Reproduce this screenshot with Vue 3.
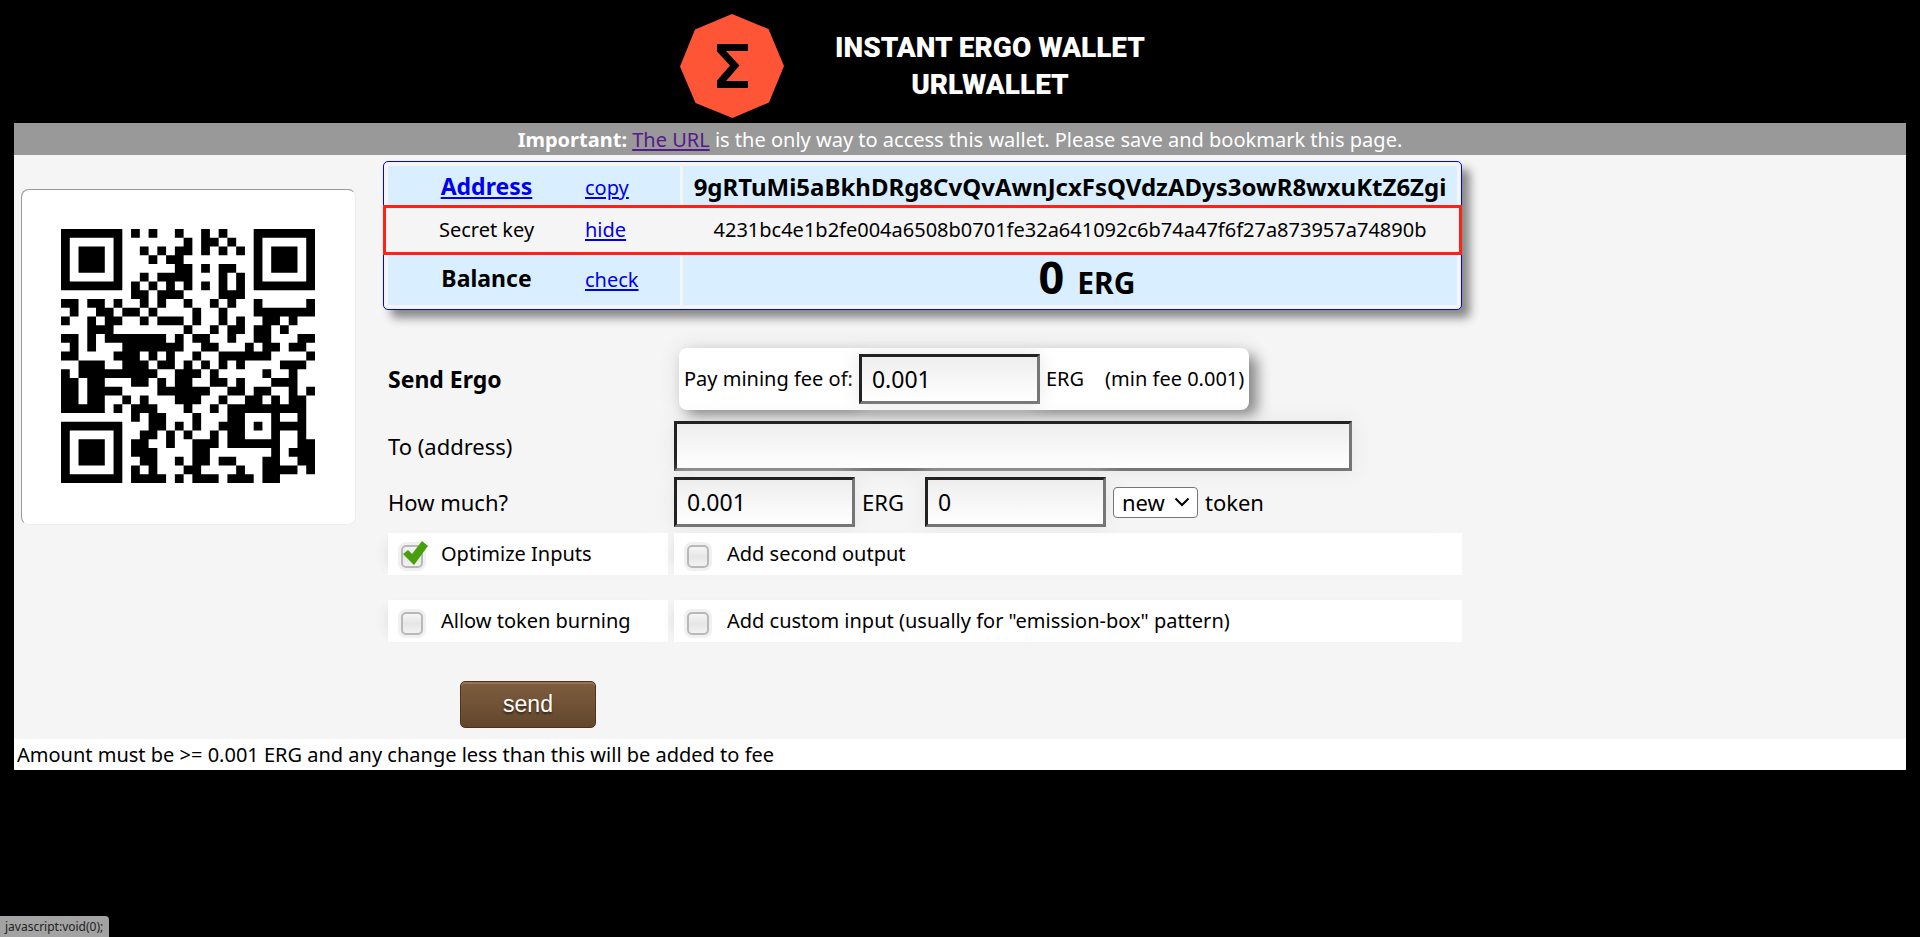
<script setup>
import { ref } from 'vue'

// Dark module runs for each QR row: [first column, last column]
const finder = [[0, 6], [22, 28]]
const ring = [[0, 0], [6, 6], [22, 22], [28, 28]]
const core = [[0, 0], [2, 4], [6, 6], [22, 22], [24, 26], [28, 28]]
const runs = [
  [...finder, [8, 8], [10, 10], [13, 13], [16, 16], [18, 18]],
  [...ring, [14, 14], [16, 17], [19, 19]],
  [...core, [9, 9], [11, 11], [13, 14], [16, 16], [18, 18], [20, 20]],
  [...core, [10, 10], [12, 13]],
  [...core, [13, 14], [16, 16], [18, 19]],
  [...ring, [9, 9], [11, 14], [18, 18], [20, 20]],
  [...finder, [8, 8], [10, 10], [12, 12], [14, 14], [16, 16], [18, 18], [20, 20]],
  [[8, 9], [11, 13], [18, 20]],
  [[0, 1], [3, 4], [6, 6], [9, 9], [11, 11], [14, 14], [17, 17], [19, 19], [22, 22], [28, 28]],
  [[1, 1], [4, 5], [7, 8], [10, 10], [15, 15], [18, 18], [22, 28]],
  [[0, 0], [3, 3], [5, 6], [9, 9], [11, 13], [15, 15], [18, 18], [20, 20], [23, 24], [26, 26]],
  [[3, 5], [14, 14], [17, 17], [19, 20], [22, 23], [25, 25]],
  [[0, 1], [3, 3], [5, 11], [13, 13], [15, 16], [19, 19], [22, 23], [27, 28]],
  [[1, 1], [3, 3], [7, 13], [16, 17], [21, 21], [23, 24], [26, 27]],
  [[0, 1], [6, 8], [10, 10], [12, 12], [15, 15], [18, 23], [28, 28]],
  [[2, 4], [7, 9], [11, 12], [14, 14], [16, 16], [18, 18], [20, 20], [25, 27]],
  [[0, 0], [2, 10], [13, 15], [17, 17], [23, 23], [26, 26]],
  [[0, 1], [3, 4], [8, 9], [11, 11], [13, 14], [17, 18], [20, 20], [24, 26]],
  [[0, 1], [3, 6], [11, 16], [19, 20], [22, 23], [26, 26], [28, 28]],
  [[0, 1], [3, 4], [7, 7], [9, 9], [13, 15], [18, 18], [21, 22], [24, 24], [26, 27]],
  [[0, 4], [6, 6], [8, 10], [14, 14], [17, 17], [19, 27]],
  [[8, 8], [10, 11], [15, 15], [19, 20], [24, 24], [27, 27]],
  [[0, 6], [10, 11], [13, 13], [15, 15], [18, 20], [22, 22], [24, 27]],
  [[0, 0], [6, 6], [9, 10], [12, 12], [14, 14], [17, 17], [19, 20], [24, 24], [27, 27]],
  [[0, 0], [2, 4], [6, 6], [8, 9], [12, 12], [15, 17], [19, 24], [27, 28]],
  [[0, 0], [2, 4], [6, 6], [8, 10], [15, 16], [24, 24], [26, 28]],
  [[0, 0], [2, 4], [6, 6], [9, 10], [13, 13], [15, 16], [18, 19], [23, 24], [27, 28]],
  [[0, 0], [6, 6], [8, 8], [10, 10], [14, 15], [20, 20], [23, 26], [28, 28]],
  [[0, 6], [8, 11], [13, 13], [15, 17], [19, 21], [23, 24]],
]
const qrPath = runs
  .map((row, y) => row.map(([a, b]) => `M${a} ${y}h${b - a + 1}v1h-${b - a + 1}z`).join(''))
  .join('')

const fee = ref('0.001')
const recipient = ref('')
const amount = ref('0.001')
const tokenAmount = ref('0')
const token = ref('new')
const optimize = ref(true)
const secondOutput = ref(false)
const burning = ref(false)
const customInput = ref(false)
</script>

<template>
  <div class="page">
    <header class="top">
      <svg class="logo" viewBox="0 0 104 104" role="img" aria-label="Ergo">
        <path fill="#ff5537" d="M52 0 88.500 15 104 52 89 88.500 52.500 104 15.500 89 0 52.500 15 15.500z" />
        <path fill="#000" d="M37 30H68V37H46L59.500 51.500 46 67H68V74H37V66.500L50 51.500 37 37.500z" />
      </svg>
      <h1>INSTANT ERGO WALLET<br />URLWALLET</h1>
    </header>

    <main>
      <p class="notice">
        <b>Important:</b> <a href="#wallet">The URL</a> is the only way to access this wallet. Please save and bookmark this page.
      </p>

      <div class="body">
        <div class="qr">
          <svg viewBox="0 0 29 29" role="img" aria-label="Wallet address QR code">
            <path :d="qrPath" />
          </svg>
        </div>

        <div class="content">
          <table id="wallet" class="wallet">
            <tbody>
              <tr class="address">
                <th scope="row"><span class="pair"><a href="#wallet">Address</a><a class="action" href="#copy">copy</a></span></th>
                <td>9gRTuMi5aBkhDRg8CvQvAwnJcxFsQVdzADys3owR8wxuKtZ6Zgi</td>
              </tr>
              <tr class="secret">
                <th scope="row"><span class="pair"><span>Secret key</span><a class="action" href="#hide">hide</a></span></th>
                <td>4231bc4e1b2fe004a6508b0701fe32a641092c6b74a47f6f27a873957a74890b</td>
              </tr>
              <tr class="balance">
                <th scope="row"><span class="pair"><span>Balance</span><a class="action" href="#check">check</a></span></th>
                <td><span class="total"><span class="zero">0</span> <span class="unit">ERG</span></span></td>
              </tr>
            </tbody>
          </table>

          <form class="send" @submit.prevent>
            <h2>Send Ergo</h2>
            <div class="fee">
              <label for="fee">Pay mining fee of:</label>
              <input id="fee" v-model="fee" class="field short" type="text" />
              <span>ERG</span>
              <span class="min">(min fee 0.001)</span>
            </div>

            <label class="name" for="to">To (address)</label>
            <input id="to" v-model="recipient" class="field long" type="text" />

            <label class="name" for="amount">How much?</label>
            <div class="amounts">
              <input id="amount" v-model="amount" class="field short" type="text" />
              <span class="erg">ERG</span>
              <input v-model="tokenAmount" class="field short" type="text" aria-label="Token amount" />
              <span class="picker">
                <select id="token" v-model="token">
                  <option>new</option>
                </select>
                <svg viewBox="0 0 16 10" aria-hidden="true"><path d="M1.500 1.500 8 8 14.500 1.500" /></svg>
              </span>
              <label for="token">token</label>
            </div>

            <label class="option"><input v-model="optimize" type="checkbox" /><span class="box"><svg v-if="optimize" viewBox="0 0 26 26"><path d="M1 14 6 10 10 14 20 1 26 6 12 25z" /></svg></span>Optimize Inputs</label>
            <label class="option"><input v-model="secondOutput" type="checkbox" /><span class="box"><svg v-if="secondOutput" viewBox="0 0 26 26"><path d="M1 14 6 10 10 14 20 1 26 6 12 25z" /></svg></span>Add second output</label>
            <label class="option lower"><input v-model="burning" type="checkbox" /><span class="box"><svg v-if="burning" viewBox="0 0 26 26"><path d="M1 14 6 10 10 14 20 1 26 6 12 25z" /></svg></span>Allow token burning</label>
            <label class="option lower"><input v-model="customInput" type="checkbox" /><span class="box"><svg v-if="customInput" viewBox="0 0 26 26"><path d="M1 14 6 10 10 14 20 1 26 6 12 25z" /></svg></span>Add custom input (usually for "emission-box" pattern)</label>

            <button type="submit">send</button>
          </form>
        </div>
      </div>

      <p class="note">Amount must be &gt;= 0.001 ERG and any change less than this will be added to fee</p>
    </main>

    <div class="status">javascript:void(0);</div>
  </div>
</template>

<style>
body {
  background: #000;
}
</style>

<style scoped>
.page {
  min-height: 100vh;
  padding: 0 14px;
  box-sizing: border-box;
  background: #000;
  color: #000;
  font-family: "Noto Sans", sans-serif;
  font-size: 20px;
  line-height: 28px;
}
.page * {
  box-sizing: border-box;
}
.top {
  display: flex;
  justify-content: center;
  align-items: flex-start;
  gap: 51px;
  padding: 14px 95px 5px 0;
}
.logo {
  width: 104px;
  height: 104px;
}
h1 {
  margin: 15px 0 0;
  color: #fff;
  font: 900 28px/37px Roboto, sans-serif;
  text-align: center;
}
a {
  color: #00e;
  text-decoration-thickness: 2px;
  text-underline-offset: 2px;
}
.notice {
  margin: 0;
  padding-top: 2px;
  background: #999;
  color: #fff;
  line-height: 30px;
  text-align: center;
}
.notice a {
  color: #551a8b;
}
.body {
  display: flex;
  align-items: flex-start;
  gap: 27px;
  padding: 6px 7px 11px;
  background: #f5f5f5;
}
.qr {
  flex: none;
  width: 335px;
  margin-top: 28px;
  padding: 39px 40px 41px 39px;
  background: #fff;
  border: 1px solid;
  border-color: #999 #eee #eee #999;
  border-radius: 8px;
}
.qr svg {
  display: block;
  width: 100%;
}
.content {
  flex: 1;
  max-width: 1079px;
}
.wallet {
  width: 100%;
  padding: 1px;
  border: 1px solid #00f;
  border-radius: 5px;
  border-spacing: 3px;
  box-shadow: 8px 8px 10px #888;
  background: #f5f5f5;
}
.wallet th,
.wallet td {
  padding: 0;
  background: #d9efff;
  text-align: center;
  font-weight: 400;
}
.wallet th {
  width: 292px;
}
.pair {
  display: grid;
  grid-template-columns: 197px 1fr;
  align-items: baseline;
  text-align: center;
}
.action {
  font-size: 20px;
  font-weight: 400;
  text-align: left;
}
.address {
  height: 41px;
}
.address .pair,
.balance .pair {
  font-size: 23px;
  font-weight: 700;
}
.address td {
  font-size: 24px;
  font-weight: 700;
}
.secret {
  height: 40px;
  outline: 3px solid #ff2112;
  outline-offset: 2px;
}
.secret th,
.secret td {
  background: #f5f5f5;
}
.balance {
  height: 52px;
}
.total {
  display: flex;
  justify-content: center;
  align-items: baseline;
  gap: 13px;
  padding: 2px 0 0 34px;
  line-height: 44px;
  font-weight: 700;
}
.zero {
  font-size: 45px;
}
.unit {
  font-size: 30px;
}
.send {
  display: grid;
  grid-template-columns: 280px 1fr;
  gap: 6px;
  margin: 38px 0 0 5px;
  align-items: center;
  justify-items: start;
}
h2 {
  margin: 0 0 5px;
  font-size: 23px;
  font-weight: 700;
}
.fee {
  display: flex;
  align-items: center;
  height: 62px;
  margin: 0 0 5px 5px;
  padding: 0 5px;
  gap: 6px;
  background: #fff;
  border-radius: 8px;
  box-shadow: 8px 8px 14px #888, 0 0 20px #ddd;
}
.min {
  margin-left: 15px;
}
.name,
.amounts {
  font-size: 22px;
}
.field {
  height: 50px;
  padding: 0 10px;
  border: 3px solid;
  border-color: #222 #767676 #767676 #222;
  border-radius: 0;
  background: linear-gradient(#eee, #fff);
  box-shadow: 0 0 20px #e6e6e6;
  color: #000;
  font: 23px "Noto Sans", sans-serif;
}
.short {
  width: 181px;
}
.long {
  width: 100%;
  max-width: 678px;
}
.amounts {
  display: flex;
  align-items: center;
  gap: 7px;
}
.erg {
  margin-right: 14px;
}
.picker {
  display: grid;
  align-items: center;
}
.picker select,
.picker svg {
  grid-area: 1 / 1;
}
.picker select {
  width: 85px;
  height: 31px;
  padding: 0 8px;
  appearance: none;
  border: 1px solid #767676;
  border-radius: 4px;
  background: #fff;
  color: #000;
  font: inherit;
  line-height: 28px;
}
.picker svg {
  justify-self: end;
  width: 16px;
  height: 10px;
  margin-right: 8px;
  fill: none;
  stroke: #000;
  stroke-width: 2;
  pointer-events: none;
}
.option {
  display: flex;
  align-items: center;
  justify-self: stretch;
  height: 42px;
  padding-left: 13px;
  background: #fff;
  box-shadow: -8px 0 12px -8px #ddd;
}
.lower {
  margin-top: 19px;
}
.option input {
  width: 22px;
  height: 23px;
  margin: 5px 0 0;
  appearance: none;
  border: 2px solid #b8b8b8;
  border-radius: 5px;
  background: linear-gradient(#f5f5f5, #e6e6e6 50%, #f2f2f2);
  box-shadow: 0 0 1px 3px #f0f0f0;
}
.box {
  display: flex;
  width: 26px;
  height: 26px;
  margin: 0 13px 2px -21px;
}
.box svg {
  position: relative;
  width: 26px;
  height: 26px;
  fill: #489f0c;
}
button {
  width: 136px;
  height: 47px;
  margin: 33px 0 0 72px;
  border: 1px solid #4e3019;
  border-radius: 5px;
  background: linear-gradient(#7f5d3d, #62472d);
  box-shadow: inset 0 2px 1px #98735f;
  color: #fff;
  font: 23px "Liberation Sans", Arial, sans-serif;
  text-shadow: 0 2px 2px #3b2414;
}
.note {
  margin: 0;
  padding: 0 3px;
  background: #fff;
  line-height: 31px;
}
.status {
  position: fixed;
  left: 0;
  bottom: 0;
  padding: 0 6px 0 5px;
  border-radius: 0 4px 0 0;
  background: #a3a3a3;
  color: #222;
  font: 12px/21px "Noto Sans", sans-serif;
}
</style>
